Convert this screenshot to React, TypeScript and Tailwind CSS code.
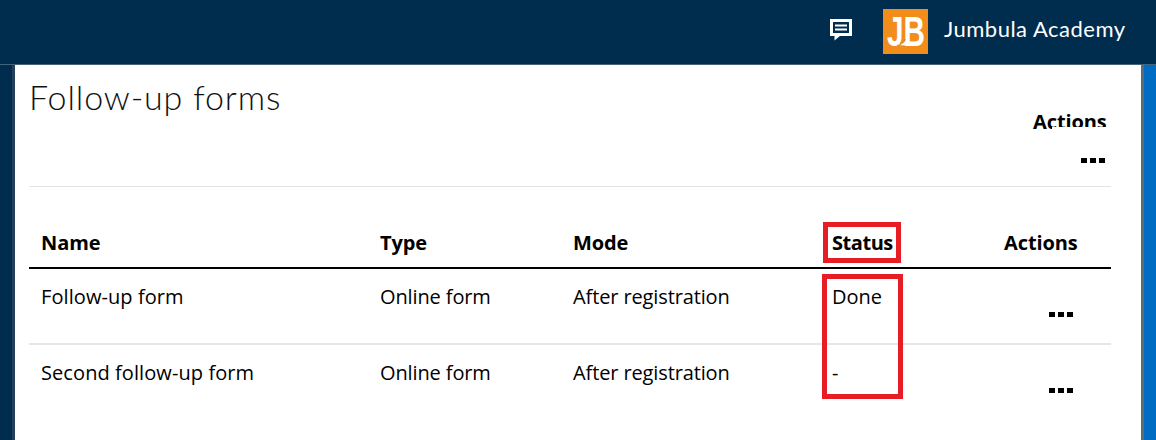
import clsx from "clsx";

interface FormRow {
    name: string;
    type: string;
    mode: string;
    status: string;
}

const forms: FormRow[] = [
    { name: "Follow-up form", type: "Online form", mode: "After registration", status: "Done" },
    { name: "Second follow-up form", type: "Online form", mode: "After registration", status: "-" },
];

const COLUMNS = "grid grid-cols-[339px_193px_259px_172px_119px]";

function Dots({ className }: { className?: string }) {
    return (
        <button aria-label="More actions" className={clsx("flex gap-[3px]", className)}>
            <span className="w-1.5 h-[5px] bg-black" />
            <span className="w-1.5 h-[5px] bg-black" />
            <span className="w-1.5 h-[5px] bg-black" />
        </button>
    );
}

function MessageIcon() {
    return (
        <svg width="22" height="22" viewBox="0 0 22 22" fill="none" stroke="white" className="mb-1">
            <path d="M1.5 1.5H20.5V15.5H1.5Z" strokeWidth="3" />
            <path d="M4.5 15.5V21.5L10.5 16.5V15.5Z" fill="white" stroke="none" />
            <path d="M5 6.5H17M5 10.5H17" strokeWidth="2" />
        </svg>
    );
}

function Logo() {
    return (
        <svg width="45" height="45" viewBox="0 0 45 45">
            <rect width="45" height="45" fill="#f28c1b" />
            <text
                x="4"
                y="36.5"
                fill="white"
                fontFamily="Liberation Sans, sans-serif"
                fontWeight="700"
                fontSize="42.5"
                textLength="38"
                lengthAdjust="spacingAndGlyphs"
            >
                JB
            </text>
            {/* ribbon joining the two letters at the foot */}
            <path d="M13 36C18 36 22.5 33 24 29V36.5Z" fill="white" />
            <path d="M14 36.5C18.5 36 21.5 33.5 22.5 30" fill="none" stroke="#c98742" strokeWidth="0.8" />
        </svg>
    );
}

function Header() {
    return (
        <header className="h-[65px] flex items-center justify-end bg-[#002d4d] border-b border-[#42647c] text-white">
            <MessageIcon />
            <div className="ml-[31px] mr-4 pb-px">
                <Logo />
            </div>
            <span className="w-[212px] pb-[7px] font-['Lato'] text-[22px] tracking-[0.5px] whitespace-nowrap">
                Jumbula Academy
            </span>
        </header>
    );
}

function FormsTable() {
    return (
        <div className="relative w-[1082px] text-[20px] leading-7">
            <div className={clsx(COLUMNS, "h-[82px] pt-[42px] border-b-2 border-black font-bold tracking-[-0.1px]")}>
                <span className="pl-3">Name</span>
                <span className="pl-3">Type</span>
                <span className="pl-3">Mode</span>
                <span className="pl-3 tracking-[-0.45px]">Status</span>
                <span className="pl-3">Actions</span>
            </div>
            {forms.map((form, i) => (
                <div
                    key={form.name}
                    className={clsx(COLUMNS, "h-[76px] pt-3.5", i < forms.length - 1 && "border-b-2 border-[#e6e6e6]")}
                >
                    <span className="pl-3 tracking-[0.08px]">{form.name}</span>
                    <span className="pl-3 tracking-[-0.12px]">{form.type}</span>
                    <span className="pl-3 tracking-[-0.12px]">{form.mode}</span>
                    <span className="pl-3">{form.status}</span>
                    <Dots className="ml-[57px] mt-[29px]" />
                </div>
            ))}
            {/* status highlights */}
            <div className="absolute left-[794px] top-[35px] w-[78px] h-[41px] border-5 border-[#e81c24]" />
            <div className="absolute left-[793px] top-[87px] w-[81px] h-[125px] border-5 border-[#e81c24]" />
        </div>
    );
}

export default function App() {
    return (
        <div className="w-[1156px] h-[440px] overflow-hidden font-['Open_Sans',sans-serif] text-black">
            <Header />
            <div className="flex h-[375px]">
                <div className="w-3 bg-[#002d4d]" />
                <main className="w-[1132px] px-3.5 bg-white border-x-3 border-l-[#24405a] border-r-[#5f6b70]">
                    <div className="w-[1082px] h-[122px] flex justify-between border-b border-[#e3e3e3]">
                        <h1 className="mt-2.5 font-['Lato'] font-light text-[34px] leading-11 tracking-[0.85px] text-[#111]">
                            Follow-up forms
                        </h1>
                        <div className="relative w-[78px] pt-[43px]">
                            <p className="text-[20px] leading-7 font-bold tracking-[-0.1px]">Actions</p>
                            <div className="absolute left-[19px] top-[62px] w-[59px] h-2.5 bg-white" />
                            <Dots className="ml-12 mt-[22px]" />
                        </div>
                    </div>
                    <FormsTable />
                </main>
                <div className="w-3 bg-[#006cc4]" />
            </div>
        </div>
    );
}
